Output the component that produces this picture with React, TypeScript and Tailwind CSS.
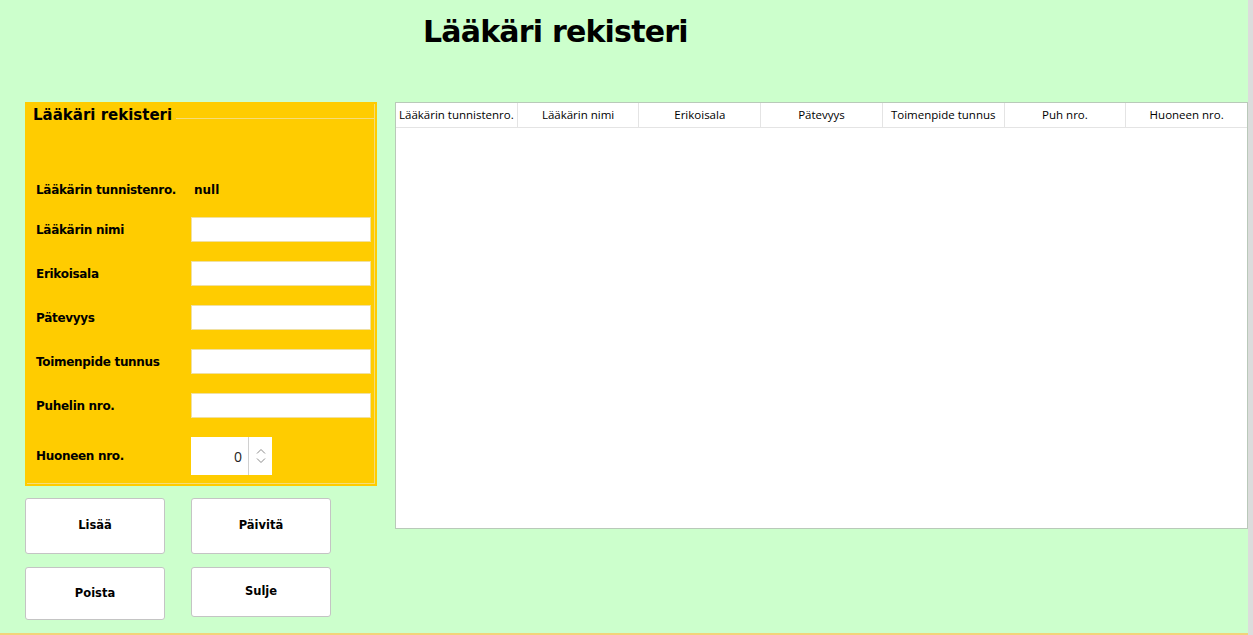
const fields = [
  { label: 'Lääkärin nimi' },
  { label: 'Erikoisala' },
  { label: 'Pätevyys' },
  { label: 'Toimenpide tunnus' },
  { label: 'Puhelin nro.' },
]

const columns = [
  'Lääkärin tunnistenro.',
  'Lääkärin nimi',
  'Erikoisala',
  'Pätevyys',
  'Toimenpide tunnus',
  'Puh nro.',
  'Huoneen nro.',
]

function Btn({ text, h }: { text: string; h: string }) {
  return (
    <button
      className={`w-[140px] ${h} bg-white border border-[#c4c4c4] rounded-[3px] text-[11.5px] font-bold text-black`}
    >
      {text}
    </button>
  )
}

export default function App() {
  return (
    <div className="w-[1253px] h-[635px] bg-[#ccffcc] flex font-['DejaVu_Sans',sans-serif] overflow-hidden">
      <div className="flex-1 flex flex-col border-b-2 border-[#f2d37a]">
        <div className="h-[102px] pl-[423px] pt-[11px]">
          <h1 className="text-[30px] font-bold tracking-[-0.8px] leading-[42px] text-black">Lääkäri rekisteri</h1>
        </div>

        <div className="flex pl-[25px] gap-[18px]">
          <div className="w-[352px] flex flex-col">
            <div className="h-[384px] bg-[#ffcc00] p-[2px]">
              <div className="h-full border-r border-b border-[#f5dc7a]">
                <div className="flex items-center">
                  <span className="pl-[6px] pr-[4px] text-[15px] font-bold text-black leading-[22px]">Lääkäri rekisteri</span>
                  <div className="flex-1 h-px bg-[#f5dc7a] mt-[6px]" />
                </div>

                <div className="flex flex-col pl-[9px] pt-[51px]">
                  <div className="flex items-center h-[25px] mb-[15px]">
                    <span className="w-[158px] text-[12px] tracking-[-0.3px] font-bold text-black">Lääkärin tunnistenro.</span>
                    <span className="text-[12px] font-bold text-black">null</span>
                  </div>
                  {fields.map((f) => (
                    <div key={f.label} className="flex items-center h-[25px] mb-[19px]">
                      <span className="w-[155px] text-[12px] tracking-[-0.3px] font-bold text-black">{f.label}</span>
                      <div className="w-[180px] h-[25px] bg-white border border-[#f0e0a0]" />
                    </div>
                  ))}
                  <div className="flex items-center h-[38px]">
                    <span className="w-[155px] text-[12px] tracking-[-0.3px] font-bold text-black">Huoneen nro.</span>
                    <div className="flex h-[38px] bg-white">
                      <div className="w-[57px] flex items-center justify-end pr-[6px] text-[14px] text-[#222] font-['Open_Sans',sans-serif]">0</div>
                      <div className="w-[24px] border-l border-[#d0d0d0] flex flex-col items-center justify-center gap-[4px] text-[#8a8a8a]">
                        <svg width="10" height="6" viewBox="0 0 10 6" fill="none" stroke="currentColor" strokeWidth="1"><path d="M1 5.5L5 1.5L9 5.5" /></svg>
                        <svg width="10" height="6" viewBox="0 0 10 6" fill="none" stroke="currentColor" strokeWidth="1"><path d="M1 0.5L5 4.5L9 0.5" /></svg>
                      </div>
                    </div>
                  </div>
                </div>
              </div>
            </div>

            <div className="flex gap-[26px] mt-[12px]">
              <Btn text="Lisää" h="h-[56px]" />
              <Btn text="Päivitä" h="h-[56px]" />
            </div>
            <div className="flex gap-[26px] mt-[13px]">
              <Btn text="Poista" h="h-[53px]" />
              <Btn text="Sulje" h="h-[50px]" />
            </div>
          </div>

          <div className="w-[853px] h-[427px] bg-white border border-[#b9c9b9] flex flex-col">
            <div className="flex h-[25px] border-b border-[#e4e4e4] font-['Open_Sans',sans-serif] text-[11.5px] text-black">
              {columns.map((c, i) => (
                <div
                  key={c}
                  className={`flex-1 flex items-center justify-center whitespace-nowrap ${i < columns.length - 1 ? 'border-r border-[#e4e4e4]' : ''}`}
                >
                  {c}
                </div>
              ))}
            </div>
          </div>
        </div>
      </div>
      <div className="w-[5px] h-full bg-[#dcdcdc]" />
    </div>
  )
}
